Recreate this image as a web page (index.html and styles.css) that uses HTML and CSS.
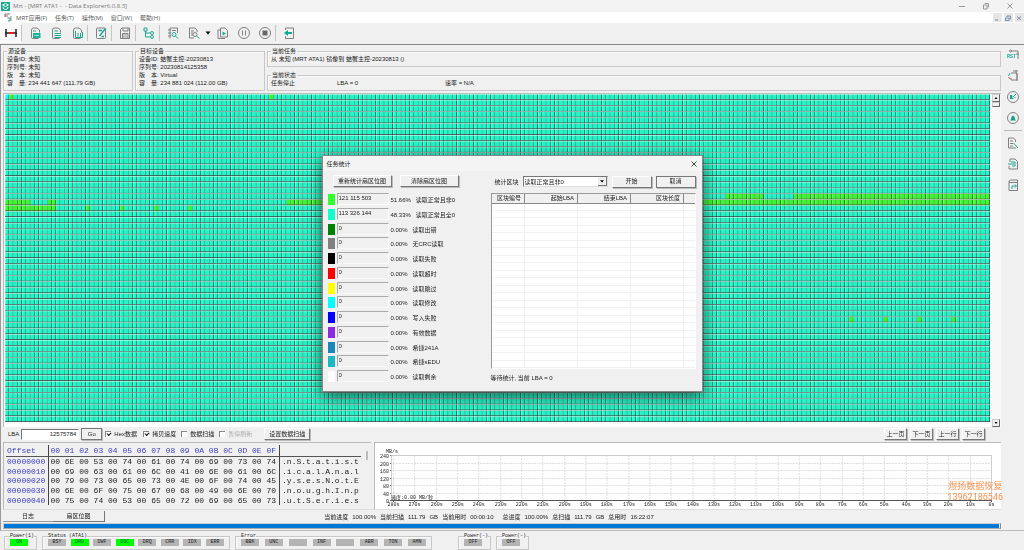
FILE: index.html
```html
<!DOCTYPE html>
<html lang="zh">
<head>
<meta charset="utf-8">
<title>Mrt - Data Explorer</title>
<link rel="stylesheet" href="styles.css">
</head>
<body>
<svg class="defs" width="0" height="0" aria-hidden="true">
  <symbol id="doc" viewBox="0 0 12 12"><path class="g" d="M10.5 5.5V3L8 1H4.5Q2.5 1 2.5 3V10.5Q2.5 11.5 3.500 11.500H9.500"/></symbol>
</svg>
<header class="titlebar">
  <svg class="logo" viewBox="0 0 9 9"><rect width="9" height="9" rx="1" fill="#18a98d"/><path d="M1.500 3L4.500 1.500L7.500 3L4.500 4.500ZM2 5Q2 7.500 4.500 7.500T7 5" fill="none" stroke="#fff"/></svg>
  <span class="grow">Mrt - [MRT ATA1 -&nbsp; - Data Explorer6.0.8.3]</span>
  <div class="wincontrols">
    <button aria-label="最小化"><svg viewBox="0 0 8 8"><path d="M1 4.500H7"/></svg></button>
    <button aria-label="还原"><svg viewBox="0 0 8 8"><path d="M1.500 3H5V7H1.500ZM3 2V1.500H6.500V5H5.500"/></svg></button>
    <button aria-label="关闭"><svg viewBox="0 0 8 8"><path d="M1.500 1.500L6.500 6.500M6.500 1.500L1.500 6.500"/></svg></button>
  </div>
</header>
<nav class="menubar">
  <svg class="doclogo" viewBox="0 0 8 9"><path d="M1 1H6M1 3H4" stroke="#777"/><path d="M1 1V4" stroke="#c44"/><path d="M3.500 5H6V8H4" stroke="#1aa58c" fill="none"/><path d="M7 3V8" stroke="#888"/></svg>
  <button>MRT应用(F)</button><button>任务(T)</button><button>操作(M)</button><button>窗口(W)</button><button>帮助(H)</button>
  <span class="grow"></span>
  <div class="mdi">
    <button aria-label="最小化窗口"><svg viewBox="0 0 8 8"><path d="M2 6H5"/></svg></button>
    <button aria-label="还原窗口"><svg viewBox="0 0 8 8"><path d="M1.500 4H5V6.500H1.500ZM3 3V2H6.500V5H5.500"/></svg></button>
    <button aria-label="关闭窗口"><svg viewBox="0 0 8 8"><path d="M2 2.500L6 6M6 2.500L2 6"/></svg></button>
  </div>
</nav>
<div class="toolbar">
  <button class="active" aria-label="任务"><svg viewBox="0 0 12 12"><path d="M0 6H12" stroke="#555" stroke-width="2"/><path d="M4 6H9" stroke="#e02020" stroke-width="2"/><path d="M1 2V10M11 2V10" stroke="#222" stroke-width="1.500"/></svg></button><i></i>
  <button aria-label="扇区"><svg viewBox="0 0 12 12"><use href="#doc"/><path class="t" d="M4 4H7"/><rect x="4" y="6" width="7.500" height="5" fill="#1cb394"/><path d="M5.500 8.500H10" stroke="#9fe0d4"/></svg></button>
  <button aria-label="列表"><svg viewBox="0 0 12 12"><use href="#doc"/><path class="t" d="M4.500 4H8M4.500 6.500H11M4.500 8.500H11M4.500 10.500H11"/></svg></button>
  <button aria-label="统计"><svg viewBox="0 0 12 12"><use href="#doc"/><path class="t" d="M4.500 4V10.500H11.500V5M7 6V10M9.500 6V10"/></svg></button><i></i>
  <button aria-label="编辑"><svg viewBox="0 0 12 12"><rect class="g" x="1.500" y="1" width="9" height="10.500" rx="1"/><path d="M4.500 9L10.500 1.500M3.500 3.500H7M6.500 9.500H9" stroke="#16a58b" stroke-width="1.300"/></svg></button><i></i>
  <button aria-label="保存"><svg viewBox="0 0 12 12"><path class="g" d="M1.500 2.500L3 1H10.500V11.500H1.500ZM4 1V4H9V1M3.500 11V6.500H9V11"/><path d="M4 8H8.500M4 10H8.500" stroke="#999"/></svg></button><i></i>
  <button aria-label="目录树"><svg viewBox="0 0 12 12"><path class="t" d="M1 1H4V4H1ZM2.500 4V10H7M2.500 6H7"/><circle class="t" cx="9" cy="6" r="1.500"/><circle class="t" cx="9" cy="10" r="1.500"/></svg></button><i></i>
  <button aria-label="查看"><svg viewBox="0 0 12 12"><path class="g" d="M3 11.500V1H10.500V6M5 3.500H9M1 3H4M1 6H4M1 9H4"/><circle class="t" cx="7" cy="7.500" r="2"/><path class="t" d="M8.500 9L11 11.500"/></svg></button>
  <button aria-label="查找"><svg viewBox="0 0 12 12"><path class="g" d="M9 5V3L7 1H1.500V11H6M3 4H6M3 6H5M3 8H5"/><circle class="g" cx="7" cy="7.500" r="2"/><path class="t" d="M8.500 9L11.500 11.500"/></svg></button>
  <button class="drop" aria-label="更多"><svg viewBox="0 0 8 12"><path d="M1.500 4.500H6.500L4 7.500Z" fill="#000"/></svg></button>
  <button aria-label="复制"><svg viewBox="0 0 12 12"><path class="g" d="M3.500 1H8L10.500 3.500V10H3.500ZM3 3H1V11.500H8"/><path d="M5.500 4.500L9 6.500L5.500 8.500Z" fill="#1aaa90"/></svg></button>
  <button aria-label="暂停"><svg viewBox="0 0 12 12"><circle class="g" cx="6" cy="6" r="5.500"/><path class="g" d="M4.500 3.500V8.500M7.500 3.500V8.500"/></svg></button>
  <button aria-label="停止"><svg viewBox="0 0 12 12"><circle class="g" cx="6" cy="6" r="5.500"/><rect x="3.500" y="3.500" width="5" height="5" fill="#666"/></svg></button><i></i>
  <button aria-label="退出"><svg viewBox="0 0 12 12"><path class="g" d="M2.500 3V1H10.500V11.500H2.500V9"/><path d="M9 6H4" stroke="#12a88c" stroke-width="2"/><path d="M1 6L5 3V9Z" fill="#12a88c"/></svg></button>
</div>
<div class="workspace">
  <main>
    <section class="info">
      <fieldset><legend>源设备</legend><p>设备ID: 未知</p><p>序列号: 未知</p><p>版　本: 未知</p><p>容　量: 234 441 647 (111.79 GB)</p></fieldset>
      <fieldset><legend>目标设备</legend><p>设备ID: 蛣蟹主控-20230813</p><p>序列号: 20230814125358</p><p>版　本: Virtual</p><p>容　量: 234 881 024 (112.00 GB)</p></fieldset>
      <div class="tasks">
        <fieldset><legend>当前任务</legend><p>从 未知 (MRT ATA1) 镜像到 蛣蟹主控-20230813 ()</p></fieldset>
        <fieldset><legend>当前状态</legend><p class="state"><span>任务停止</span><span>LBA = 0</span><span>速率 = N/A</span></p></fieldset>
      </div>
    </section>
    <section class="map">
      <canvas id="map"></canvas>
      <div class="scroll"><button aria-label="向上"><svg viewBox="0 0 6 6"><path d="M1.500 4H4.500L3 2Z"/></svg></button><b></b><span class="grow"></span><button aria-label="向下"><svg viewBox="0 0 6 6"><path d="M1.500 2H4.500L3 4Z"/></svg></button></div>
    </section>
    <form class="controls">
      <label for="lba">LBA</label><input id="lba" type="text" value="12575784"><button type="button" class="btn go">Go</button>
      <label class="check"><input type="checkbox" checked>Hex数据</label>
      <label class="check"><input type="checkbox" checked>拷贝速度</label>
      <label class="check"><input type="checkbox">数据扫描</label>
      <label class="check off"><input type="checkbox" disabled>暂停刷新</label>
      <button type="button" class="btn scan">设置数据扫描</button>
      <span class="grow"></span>
      <div class="pager"><button type="button" class="btn">上一页</button><button type="button" class="btn">下一页</button><button type="button" class="btn">上一行</button><button type="button" class="btn">下一行</button></div>
    </form>
    <section class="lower">
      <div class="hex">
        <table>
          <thead><tr><th>Offset</th><th>00 01 02 03 04 05 06 07 08 09 0A 0B 0C 0D 0E 0F</th><th></th></tr></thead>
          <tbody>
            <tr><th>00000000</th><td>00 6E 00 53 00 74 00 61 00 74 00 69 00 73 00 74</td><td>.n.S.t.a.t.i.s.t</td></tr>
            <tr><th>00000010</th><td>00 69 00 63 00 61 00 6C 00 41 00 6E 00 61 00 6C</td><td>.i.c.a.l.A.n.a.l</td></tr>
            <tr><th>00000020</th><td>00 79 00 73 00 65 00 73 00 4E 00 6F 00 74 00 45</td><td>.y.s.e.s.N.o.t.E</td></tr>
            <tr><th>00000030</th><td>00 6E 00 6F 00 75 00 67 00 68 00 49 00 6E 00 70</td><td>.n.o.u.g.h.I.n.p</td></tr>
            <tr><th>00000040</th><td>00 75 00 74 00 53 00 65 00 72 00 69 00 65 00 73</td><td>.u.t.S.e.r.i.e.s</td></tr>
          </tbody>
        </table>
        <b></b>
      </div>
      <div class="chart">
        <svg id="chart" viewBox="0 0 625 65"></svg>
        <div class="contact">煜扬数据恢复<br>13962186546</div>
      </div>
    </section>
    <div class="tabs">
      <button>日志</button><button class="current">扇区位图</button>
      <div class="progress-text"><span>当前进度</span><span>100.00%</span><span>当前扫描</span><span>111.79</span><span>GB</span><span>当前用时</span><span>00:00:10</span><span class="total">总进度</span><span>100.00%</span><span>总扫描</span><span>111.79</span><span>GB</span><span>总用时</span><span>16:22:07</span></div>
    </div>
    <div class="bar"><div></div></div>
  </main>
  <aside>
    <button aria-label="复位"><svg viewBox="0 0 12 12"><path class="g" d="M4 2H11V10M9 5H12"/><circle class="g" cx="3.500" cy="2" r="1"/><text x="0" y="9">RST</text></svg></button>
    <button aria-label="电源"><svg viewBox="0 0 12 12"><path class="g" d="M6 1H11M9 0V3M4 3H10V10H4V8M10 3V11"/><path class="t" d="M3 3L1.500 6"/><path d="M1.500 7L3 9" stroke="#e44" fill="none"/></svg></button>
    <button aria-label="刷新"><svg viewBox="0 0 12 12"><circle class="g" cx="6" cy="6" r="5.500"/><path d="M3 4V8H7.500L5.500 7L5 4Z" fill="#159f88"/><path class="t" d="M6 6L9 3M8 6V7"/></svg></button>
    <button aria-label="提醒"><svg viewBox="0 0 12 12"><circle class="g" cx="6" cy="6" r="5.500"/><path d="M3 8.500Q4.500 7 4.500 5Q6 2 7.500 5Q7.500 7 9 8.500Z" fill="#0fa185"/></svg></button>
    <i></i>
    <button aria-label="查找记录"><svg viewBox="0 0 12 12"><path class="g" d="M8.500 5V3L6.500 1H1.500V11H9M3 4H6M3 6.500H6M3 9H6"/><path class="t" d="M6.500 6L11 11"/></svg></button>
    <button aria-label="导入"><svg viewBox="0 0 12 12"><path class="g" d="M3 4V1H8L10.500 3.500V11H2V8"/><path class="t" d="M1 6H7M4 4H8V8H5" stroke-width="1.500"/></svg></button>
    <button aria-label="导出"><svg viewBox="0 0 12 12"><path class="g" d="M2 11.500V2L3.500 1H10.500V11.500H2M2 3.500H10"/><path class="t" d="M5 10V7H9M8 5.500L9.500 7L8 8.500" stroke-width="1.500"/></svg></button>
  </aside>
</div>
<footer id="status"></footer>

<section class="dialog" role="dialog" aria-labelledby="dlg-title">
  <header><h1 id="dlg-title">任务统计</h1><button aria-label="关闭"><svg viewBox="0 0 8 8"><path d="M1.500 1.500L6.500 6.500M6.500 1.500L1.500 6.500"/></svg></button></header>
  <div class="dialog-body">
    <div class="left">
      <div class="actions"><button class="btn">重新统计扇区位图</button><button class="btn">清除扇区位图</button></div>
      <div id="stats"></div>
    </div>
    <div class="right">
      <div class="pick"><label for="kind">统计区块</label><span class="combo"><select id="kind"><option>读取正常且非0</option></select><svg viewBox="0 0 8 10"><path d="M1.500 4H6.500L4 7Z"/></svg></span><button class="btn">开始</button><button class="btn strong">取消</button></div>
      <div class="blocks"><table><thead><tr><th>区块编号</th><th>起始LBA</th><th>结束LBA</th><th>区块长度</th><th></th></tr></thead><tbody><tr><td></td><td></td><td></td><td></td><td></td></tr></tbody></table></div>
      <p>等待统计, 当前 LBA = 0</p>
    </div>
  </div>
</section>
<script src="app.js"></script>
</body>
</html>
```
FILE: styles.css
```css
* { box-sizing: border-box; }
body { margin: 0; min-height: 100vh; background: #f0f0f0; color: #222; font: 6px/8px "Liberation Sans", "Noto Sans CJK SC", sans-serif; position: relative; overflow: hidden; }
button, input, select { font: inherit; color: inherit; margin: 0; padding: 0; }
button { border: 0; background: none; white-space: nowrap; }
p { margin: 0; }
svg { display: block; fill: none; }
.defs { position: absolute; }
.grow { flex: 1; }
.g { stroke: #808080; fill: none; stroke-width: 1; }
.t { stroke: #1aaa90; fill: none; stroke-width: 1; }

.titlebar { display: flex; align-items: center; height: 12px; padding-left: 1px; gap: 3px; background: #f3f3f3; color: #777; font-family: "Open Sans", sans-serif; }
.logo { width: 9px; height: 9px; }
.wincontrols { display: flex; gap: 16px; padding-right: 10px; }
.wincontrols svg, .mdi svg { width: 8px; height: 8px; stroke: #999; stroke-width: 1; }
.menubar { display: flex; align-items: center; height: 11px; background: #fff; color: #555; gap: 8px; padding-left: 4px; font-family: "Open Sans", "Noto Sans CJK SC", sans-serif; }
.doclogo { width: 8px; height: 9px; margin-right: -4px; }
.mdi { display: flex; gap: 2px; background: #fff; }
.mdi button { width: 9px; height: 9px; background: #e6e6e6; }
.mdi svg { stroke: #7890a8; }

.toolbar { display: flex; height: 22px; padding-bottom: 1px; border-bottom: 1px solid #888; }
.toolbar button { width: 21px; display: flex; align-items: center; justify-content: center; }
.toolbar .active { background: #f9f9f9; }
.toolbar .drop { width: 8px; }
.toolbar svg { width: 12px; height: 12px; }
.toolbar .drop svg { width: 8px; }
.toolbar i { width: 3px; border-left: 1px solid #c4c4c4; margin: 2px 0; }

.workspace { display: flex; border-left: 1px solid #999; border-bottom: 1px solid #bbb; }
main { flex: 1; min-width: 0; padding-left: 2px; }
aside { width: 23px; display: flex; flex-direction: column; align-items: center; padding-top: 4px; gap: 9px; }
aside svg { width: 12px; height: 12px; }
aside text { font: bold 5px "Liberation Mono", monospace; fill: #1aaa90; }
aside i { width: 18px; border-top: 1px solid #bbb; margin: -3px 0; }

fieldset { margin: 0; min-width: 0; padding: 0 3px; border: 1px solid #c8c8c8; box-shadow: inset 1px 1px #fafafa; }
legend { padding: 0 1px; line-height: 8px; }
.info { display: grid; grid-template-columns: 130px 130px minmax(0, 1fr); column-gap: 2px; padding-top: 2px; height: 46px; }
.info fieldset { height: 44px; }
.tasks { display: flex; flex-direction: column; justify-content: space-between; height: 44px; }
.tasks fieldset { height: 20px; }
.state { display: grid; grid-template-columns: 66px 108px auto; }

.map { display: flex; height: 334px; margin-top: 2px; border: 1px solid #bbb; border-right: 0; border-bottom: 0; padding: 0 0 4px 1px; background: #fff; }
#map { display: block; flex: 1; min-width: 0; width: 100%; height: 328px; }
.scroll { width: 11px; display: flex; flex-direction: column; align-items: flex-end; padding-right: 1px; background: #f8f8f8; margin-bottom: -4px; }
.scroll button, .scroll b { width: 8px; height: 8px; background: #f0f0f0; border: 1px solid #ccc; border-right-color: #666; border-bottom-color: #666; }
.scroll b { height: 5px; }
.scroll svg { fill: #000; width: 6px; height: 6px; }

.btn { background: #f0f0f0; border: 1px solid #fff; border-right-color: #777; border-bottom-color: #777; box-shadow: 1px 1px #bbb; line-height: 9px; height: 12px; }
.controls { display: flex; align-items: center; height: 14px; margin-bottom: 1px; padding: 0 16px 0 5px; }
#lba { width: 58px; height: 11px; margin: 0 2px; text-align: right; padding-right: 2px; border: 1px solid #fff; border-top-color: #777; border-left-color: #777; background: #fff; }
.go { width: 21px; height: 12px; border-color: #777; margin-right: 3px; }
.check { display: flex; align-items: center; gap: 3px; width: 38px; white-space: nowrap; }
.check input { appearance: none; width: 6px; height: 6px; background: #fff; border-top: 1px solid #888; border-left: 1px solid #888; position: relative; }
.check input:checked::after { content: ""; position: absolute; left: 1px; top: 0; width: 3px; height: 2px; border-left: 1px solid #000; border-bottom: 1px solid #000; transform: rotate(-45deg); }
.off { color: #aaa; }
.scan { width: 46px; margin-left: 7px; }
.pager { display: flex; gap: 3px; }
.pager .btn { width: 23px; }

.lower { display: flex; gap: 3px; height: 67px; }
.hex { width: 368px; padding: 2px 2px 0; border-top: 1px solid #bbb; border-left: 1px solid #bbb; display: flex; justify-content: space-between; font: 8px/9px "Liberation Mono", monospace; white-space: pre; }
.hex b { width: 2px; height: 9px; margin: 6px 1px 0; background: #bbb; }
.hex table { border-collapse: collapse; height: 60px; }
.hex th, .hex td { padding: 0 2px; text-align: left; font-weight: normal; }
.hex th { color: #4040c0; }
.hex thead th { border-bottom: 1px solid #555; height: 11px; }
.hex tr > :first-child { padding: 0 3px 0 1px; border-right: 1px solid #444; }
.hex tr > :nth-child(2) { padding: 0 3px 0 1px; border-right: 1px solid #444; }
.chart { flex: 1; min-width: 0; position: relative; background: #fff; border-top: 1px solid #bbb; border-left: 1px solid #bbb; }
.chart svg { width: 100%; }
.chart text { font: 5px "Liberation Mono", "Noto Sans CJK SC", monospace; fill: #222; }
.chart .grid { stroke: #dedede; stroke-dasharray: 2 1; }
.chart .frame { stroke: #ccc; }
.chart .axis { stroke: #555; }
.contact { position: absolute; right: -2px; bottom: 6px; color: #f79250; font: 9px/11px Roboto, "Noto Sans CJK SC", sans-serif; text-align: center; }

.tabs { display: flex; height: 14px; align-items: center; border-top: 1px solid #ddd; }
.tabs > button { width: 50px; height: 10px; border-bottom: 1px solid #999; }
.tabs > .current { width: 52px; height: 11px; border-right: 1px solid #777; border-bottom-color: #777; }
.progress-text { flex: 1; display: flex; justify-content: center; gap: 4px; padding-right: 128px; white-space: nowrap; }
.total { margin-left: 5px; }
.bar { border: 1px solid #ccc; border-right-color: #888; border-bottom-color: #aaa; margin-bottom: 1px; padding-right: 1px; }
.bar div { height: 4px; background: #0078d7; }

footer { display: flex; padding: 2px 4px 0; font: 5px/6px "Liberation Mono", monospace; }
footer fieldset { display: flex; justify-content: space-between; width: 33px; height: 17px; padding: 0 5px; margin-right: 5px; }
footer legend { line-height: 6px; font-size: 5px; padding: 0; margin-right: -4px; }
footer span { width: 18px; height: 7px; line-height: 7px; text-align: center; background: #b4b4b4; color: #222; }
footer .lit { background: #0f0; color: #064; }
footer .wide { width: 188px; }
footer .error { width: 197px; margin-right: 26px; }

.dialog { position: absolute; inset: 0; margin: auto; top: -3px; width: 381px; height: 237px; background: #f0f0f0; border: 1px solid #888; box-shadow: 0 4px 14px rgba(0, 0, 0, .6); }
.dialog header { display: flex; align-items: center; justify-content: space-between; height: 15px; padding: 0 4px; background: #f4f4f4; }
.dialog h1 { margin: 0; font: inherit; }
.dialog header svg { width: 8px; height: 8px; stroke: #444; stroke-width: 1; }
.dialog-body { display: grid; grid-template-columns: 160px minmax(0, 1fr); padding: 4px 6px 0 5px; }
.actions { display: flex; gap: 8px; padding-left: 5px; height: 18px; }
.actions .btn { flex: 0 0 59px; }
#stats { height: 192px; display: grid; grid-auto-rows: 1fr; }
.stat { display: grid; grid-template-columns: 7px 52px auto; column-gap: 2px; }
.stat i { height: 11px; margin-top: 1px; }
.stat input { width: 52px; height: 12px; padding: 0 1px 2px; background: #f0f0f0; border: 1px solid #fafafa; border-top-color: #aaa; border-left-color: #aaa; }
.stat label { display: flex; gap: 5px; padding: 3px 0 0; white-space: nowrap; }
.right { padding-left: 3px; }
.pick { display: flex; align-items: center; gap: 4px; height: 13px; padding-left: 4px; margin-bottom: 5px; }
.pick label { width: 24px; }
.combo { flex: 1; position: relative; }
.combo select { appearance: none; width: 100%; height: 11px; padding: 0 1px; background: #fff; border: 1px solid #ddd; border-top-color: #777; border-left-color: #777; border-radius: 0; display: block; }
.combo svg { position: absolute; right: 1px; top: 1px; width: 9px; height: 9px; background: #eee; fill: #000; border-right: 1px solid #777; border-bottom: 1px solid #777; pointer-events: none; }
.pick .btn { width: 40px; }
.pick .strong { border-color: #777; }
.blocks { height: 176px; border: 1px solid #fff; border-left-color: #999; border-top-color: #999; background: #fff; }
.blocks table { width: 100%; height: 100%; table-layout: fixed; border-collapse: collapse; }
.blocks th { height: 9px; padding: 0 3px; background: #f0f0f0; font-weight: normal; text-align: right; line-height: 7px; border-right: 1px solid #888; border-bottom: 1px solid #888; }
.blocks th:first-child { width: 33px; }
.blocks th:nth-child(n+2):nth-child(-n+4) { width: 53px; }
.blocks th:last-child, .blocks td:last-child { border-right: 0; }
.blocks td { border-right: 1px solid #f0f0f0; }
.blocks tbody { background: repeating-linear-gradient(#fff 0 7px, #f1f1f1 7px 8px, #fff 8px 14px, #f1f1f1 14px 15px); }
.right p { padding: 5px 0 0; }
```
FILE: app.js
```js
// Sector map: 231 x 56 cells, ranges are [row, first column, last column].
const COLS = 231, ROWS = 56;
const green = [[0, 1, 1], [0, 62, 62], [17, 169, 177], [17, 185, 230], [18, 0, 5], [18, 10, 11], [18, 66, 74], [18, 163, 230],
  [19, 0, 11], [19, 19, 19], [19, 27, 27], [19, 35, 35], [19, 43, 43], [38, 198, 198], [38, 206, 206], [38, 214, 214], [38, 222, 222]];
const map = document.getElementById('map');
const ctx = map.getContext('2d');
function fill(row, from, to, color) {
  ctx.fillStyle = color;
  ctx.fillRect(from * 8, row * 11, (to - from + 1) * 8, 11);
}
function drawMap() {
  const w = map.clientWidth, h = map.clientHeight;
  map.width = w;
  map.height = h;
  ctx.scale(w / (COLS * 8), h / (ROWS * 11));
  ctx.fillStyle = '#0cffc8';
  ctx.fillRect(0, 0, COLS * 8, ROWS * 11);
  for (const [r, a, b] of green) fill(r, a, b, '#2cff24');
  fill(0, 0, 0, '#00ffff');
  for (let c = 0; c < COLS; c++) {
    ctx.fillStyle = '#ffffff';
    ctx.fillRect(c * 8, 0, 0.7, ROWS * 11);
    ctx.fillStyle = '#502030';
    ctx.fillRect(c * 8 + 6.8, 0, 1.2, ROWS * 11);
  }
  for (let r = 0; r < ROWS; r++) {
    ctx.fillStyle = '#ffffff';
    ctx.fillRect(0, r * 11, COLS * 8, 0.9);
    ctx.fillStyle = '#502030';
    ctx.fillRect(0, r * 11 + 9.8, COLS * 8, 1.2);
  }
}
drawMap();
addEventListener('resize', drawMap);

// Speed chart
let s = '';
const L = 18, R = 615, T = 12, B = 57;
for (let i = 0; i <= 6; i++) {
  const y = Math.round(T + (B - T) * i / 6) + 0.5;
  if (i && i < 6) s += `<path class="grid" d="M${L} ${y}H${R}"/>`;
  s += `<path class="axis" d="M15 ${y}H17"/><text x="14" y="${y + 2}" text-anchor="end">${240 - 40 * i}</text>`;
}
for (let i = 0; i <= 28; i++) {
  const x = Math.round(L + (R - L) * i / 28) + 0.5;
  if (i < 28) s += `<path class="grid" d="M${x} ${T}V${B}"/>`;
  s += `<path class="axis" d="M${x} ${B}V${B + 2}"/><text x="${x}" y="63" text-anchor="middle">${280 - 10 * i}s</text>`;
}
s += `<path class="frame" d="M16.5 ${B}V${T + 0.5}H${R + 0.5}V${B}"/><path class="axis" d="M16 ${B + 0.5}H${R + 1}"/>`;
s += '<text x="11" y="10">MB/s</text><text x="16" y="56">速度:0.00 MB/秒</text>';
document.getElementById('chart').innerHTML = s;

// Status lamps
const groups = [['Power(1)', '', ['ON'], ['ON']],
  ['Status (ATA1)', 'wide', ['BSY', 'DRD', 'DWF', 'DSC', 'DRQ', 'CRR', 'IDX', 'ERR'], ['DRD', 'DSC']],
  ['Error', 'error', ['BBK', 'UNC', '', 'INF', '', 'ABR', 'TON', 'AMN'], []],
  ['Power(-)', '', ['OFF'], []], ['Power(-)', '', ['OFF'], []]];
document.getElementById('status').innerHTML = groups.map(([name, cls, lamps, lit]) =>
  `<fieldset class="${cls}"><legend>${name}</legend>${lamps.map(l => `<span class="${lit.includes(l) ? 'lit' : ''}">${l}</span>`).join('')}</fieldset>`).join('');

// Sector statistics
const stats = [['#32ff32', '121 115 503', '51.66%', '读取正常且非0'], ['#14ffcc', '113 326 144', '48.33%', '读取正常且全0'],
  ['#008000', '0', '0.00%', '读取出错'], ['#808080', '0', '0.00%', '无CRC读取'], ['#000', '0', '0.00%', '读取失败'],
  ['#f00', '0', '0.00%', '读取超时'], ['#ff0', '0', '0.00%', '读取跳过'], ['#0ff', '0', '0.00%', '读取修改'],
  ['#00f', '0', '0.00%', '写入失败'], ['#8a2be2', '0', '0.00%', '有效数据'], ['#1a86ba', '0', '0.00%', '希捷241A'],
  ['#1cb8c4', '0', '0.00%', '希捷sEDU'], ['#fff', '0', '0.00%', '读取剩余']];
document.getElementById('stats').innerHTML = stats.map(([color, n, pct, name], i) =>
  `<div class="stat"><i style="background:${color}"></i><input id="s${i}" readonly value="${n}"><label for="s${i}"><span>${pct}</span><span>${name}</span></label></div>`).join('');
```
